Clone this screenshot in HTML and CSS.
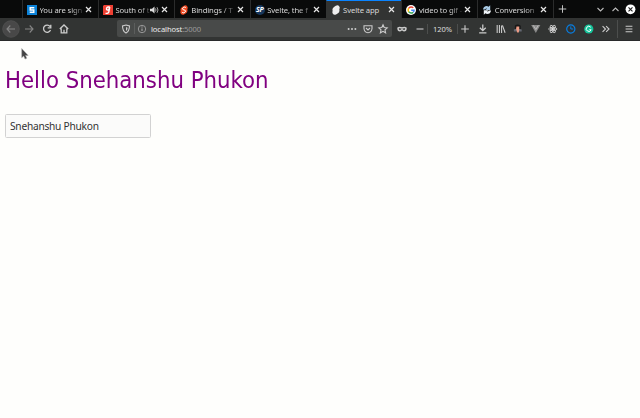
FILE: index.html
```
<!DOCTYPE html>
<html lang="en">
<head>
<meta charset="utf-8">
<title>Svelte app</title>
<link rel="stylesheet" href="styles.css">
</head>
<body>
<header class="tabs">
  <div class="tab"><svg class="fav" viewBox="0 0 10 10"><path fill="#0b82d8" d="M0 0h10v10H0z"/><path d="M7.3 2.8H3.2V5h3.6v2.2H2.7" fill="none" stroke="#fff" stroke-width="1.4"/></svg><span class="title">You are sign</span><svg class="close" viewBox="0 0 7 7"><path d="M1 1l5 5M6 1L1 6"/></svg></div>
  <div class="tab"><svg class="fav" viewBox="0 0 10 10"><path fill="#ee4033" d="M1 0h9v10H0V1z"/><path d="M6.8 2H5Q3.8 2 3.5 3.5T4.6 5h1L6.8 2 5.8 7Q5.5 8.4 4 8.3H2.5" fill="none" stroke="#fff" stroke-width="1.3"/></svg><span class="title">South of t</span><svg class="sound" viewBox="0 0 9 8"><path d="M0 2.8h2L4.5.5v7L2 5.2H0z" fill="#ddd"/><path d="M5.5 2.4q1 1.6 0 3.2M7 1.2q2 2.8 0 5.6" fill="none" stroke="#ccc" stroke-width=".8"/></svg><svg class="close" viewBox="0 0 7 7"><path d="M1 1l5 5M6 1L1 6"/></svg></div>
  <div class="tab"><svg class="fav" viewBox="0 0 10 10"><path fill="#f04a22" d="M4.8.7Q7-.7 8.3 1.4 9.2 2.9 8.3 4 9 7 7 8.2L5 9.4Q3 10.5 1.7 8.4 1 7 1.7 6 .8 3.3 3 1.9z"/><path d="M6.8 2.6Q6 1.5 4.8 2.3L3.9 2.9Q2.8 4 4 4.7l2 .5Q7.3 6 6 7.1l-.9.6Q4 8.4 3.1 7.3" fill="none" stroke="#fff" stroke-width="1"/></svg><span class="title">Bindings / T</span><svg class="close" viewBox="0 0 7 7"><path d="M1 1l5 5M6 1L1 6"/></svg></div>
  <div class="tab"><span class="fav sp">SP</span><span class="title">Svelte, the f</span><svg class="close" viewBox="0 0 7 7"><path d="M1 1l5 5M6 1L1 6"/></svg></div>
  <div class="tab active"><svg class="fav" viewBox="0 0 10 10"><path fill="#eee" d="M4.8.7Q7-.7 8.3 1.4 9.2 2.9 8.3 4 9 7 7 8.2L5 9.4Q3 10.5 1.7 8.4 1 7 1.7 6 .8 3.3 3 1.9z"/></svg><span class="title">Svelte app</span><svg class="close" viewBox="0 0 7 7"><path d="M1 1l5 5M6 1L1 6"/></svg></div>
  <div class="tab"><svg class="fav" viewBox="0 0 10 10"><circle cx="5" cy="5" r="5" fill="#fff"/><g fill="none" stroke-width="1.4"><path stroke="#ea4335" d="M7.3 2.8Q5 .9 2.6 3.2"/><path stroke="#fbbc05" d="M2.6 3.2Q1.6 5 2.6 6.8"/><path stroke="#34a853" d="M2.6 6.8Q4.6 9 7.2 7.3"/><path stroke="#4285f4" d="M7.2 7.3Q8 6.5 8.1 5.2H5.2"/></g></svg><span class="title">video to gif -</span><svg class="close" viewBox="0 0 7 7"><path d="M1 1l5 5M6 1L1 6"/></svg></div>
  <div class="tab"><svg class="fav" viewBox="0 0 10 10"><path fill="#a9cbe6" d="M1 4.6Q1.4 1 5 1L6.6 1.7 8.2.3V5H3.6L5 3.6Q3.7 3.2 3.2 4.6z"/><path fill="#f0f5fa" d="M9 5.5Q8.6 9 5 9L3.4 8.3 1.8 9.7V5.2H6.4L5 6.5Q6.3 6.9 6.8 5.5z"/></svg><span class="title">Conversion</span><svg class="close" viewBox="0 0 7 7"><path d="M1 1l5 5M6 1L1 6"/></svg></div>
  <svg class="newtab" viewBox="0 0 18 18"><path d="M9 5v8M5 9h8"/></svg>
  <div class="window">
    <svg viewBox="0 0 15 18"><path d="M4.5 8l3 3 3-3"/></svg>
    <svg viewBox="0 0 15 18"><path d="M4.5 11l3-3 3 3"/></svg>
    <svg viewBox="0 0 15 18"><circle cx="7.5" cy="9.3" r="4.9" fill="#fff" stroke="none"/><path d="M5.5 7.3l4 4M9.5 7.3l-4 4" stroke="#222"/></svg>
  </div>
</header>
<nav class="bar">
  <svg class="ic dim" viewBox="0 0 18 18"><circle cx="9" cy="9" r="8.3" fill="#484848" stroke="#555" stroke-width=".7"/><path d="M13 9H5M8.3 5.5L5 9l3.3 3.5"/></svg>
  <svg class="ic dim" viewBox="0 0 18 18"><path d="M5 9h8M9.7 5.5L13 9l-3.3 3.5"/></svg>
  <svg class="ic" viewBox="0 0 18 18"><path d="M12 6.5A3.6 3.6 0 1 0 12.5 10M12.8 4.8v3H9.7" stroke-width="1.3"/></svg>
  <svg class="ic home" viewBox="0 0 18 18"><path d="M4.8 9L9 5l4.2 4M6.2 8.5v4.3h5.6V8.5M9 12.7V9.8" stroke-width="1.3"/></svg>
  <div class="url">
    <svg class="ic" viewBox="0 0 18 18"><path d="M9 5l3.5 1q0 5-3.5 7-3.5-2-3.5-7z"/><path d="M9 7v4q1.5-1 1.6-3.3z" fill="#ccc" stroke="none"/></svg>
    <i class="sep"></i>
    <svg class="ic info" viewBox="0 0 18 18"><circle cx="9" cy="9" r="3.7" stroke-width=".8"/><path d="M9 8.5v2.6M9 6.5v1"/></svg>
    <span class="host">localhost<span class="port">:5000</span></span>
    <div class="actions">
      <svg class="ic" viewBox="0 0 18 18"><g fill="#ccc" stroke="none"><circle cx="5.6" cy="9" r="1"/><circle cx="9" cy="9" r="1"/><circle cx="12.4" cy="9" r="1"/></g></svg>
      <svg class="ic" viewBox="0 0 18 18"><path d="M5 5.8h8v3q-.5 3.7-4 3.9-3.5-.2-4-3.9zM7 8l2 2 2-2"/></svg>
      <svg class="ic" viewBox="0 0 18 18"><path d="M9 4.8l1.2 2.7 3 .3-2.2 2 .6 3L9 11.3l-2.6 1.5.6-3-2.2-2 3-.3z"/></svg>
    </div>
  </div>
  <svg class="ic mask" viewBox="0 0 18 18"><path d="M5 8q1.5-1.2 4 0 2.5-1.2 4 0 0 2.8-2 2.8L9 9.7l-2 1.1Q5 10.8 5 8z" stroke-width="1.5"/></svg>
  <svg class="ic" viewBox="0 0 18 18"><path d="M5.5 9h7"/></svg>
  <span class="zoom">120%</span>
  <svg class="ic" viewBox="0 0 18 18"><path d="M9 5.2v7.6M5.2 9h7.6"/></svg>
  <div class="tools">
    <svg viewBox="0 0 18 18"><path d="M9 4.5v6M6 7.7l3 3 3-3M5.3 13h7.4" stroke-width="1.3"/></svg>
    <svg viewBox="0 0 18 18"><path d="M5.3 5v8M7.6 5v8M9.8 5.5V13M10.7 5.3l2.7 7.5" stroke-width="1.1"/></svg>
    <svg class="avatar" viewBox="0 0 18 18"><path fill="#171717" d="M6 5.5Q9 3 12 5.8L12 9H6z"/><path fill="#646872" d="M5 9.5l3-1 5 1v2H5z"/><path fill="#ee9c85" d="M7.6 6.5h2.9v3.2l-.5 3H8.4L7.3 9z"/></svg>
    <svg viewBox="0 0 18 18"><path fill="#8b8b8b" stroke="none" d="M4.3 5h9.4L9 13.2z"/><path d="M6.5 5.3L9 9.5l2.5-4.2" stroke="#bbb"/></svg>
    <svg viewBox="0 0 18 18"><g stroke-width=".9"><ellipse cx="9" cy="9" rx="4.3" ry="1.7"/><ellipse cx="9" cy="9" rx="4.3" ry="1.7" transform="rotate(60 9 9)"/><ellipse cx="9" cy="9" rx="4.3" ry="1.7" transform="rotate(120 9 9)"/></g><circle cx="9" cy="9" r="1.2" fill="#ddd" stroke="none"/></svg>
    <svg viewBox="0 0 18 18"><circle cx="9" cy="9" r="4.2" stroke="#087de0" stroke-width="1.2"/><path d="M9 6.3V9h2.5" stroke="#087de0"/></svg>
    <svg viewBox="0 0 18 18"><circle cx="9" cy="9" r="4.7" fill="#15c39a" stroke="none"/><path d="M11 7.2A2.6 2.6 0 1 0 11.4 9.8H9.5" stroke="#fff"/></svg>
    <svg viewBox="0 0 18 18"><path d="M5.7 6l3 3-3 3M9.3 6l3 3-3 3" stroke-width="1.1"/></svg>
  </div>
  <i class="sep tall"></i>
  <svg class="ic menu" viewBox="0 0 18 18"><path d="M5.6 6.3h6.8M5.6 9h6.8M5.6 11.7h6.8"/></svg>
</nav>
<main class="page">
  <h1>Hello Snehanshu Phukon</h1>
  <input class="name" type="text" value="Snehanshu Phukon">
</main>
<svg class="cursor" viewBox="0 0 8 12"><path d="M.7.5v9.2l2-1.6 1.3 3 1.8-.9-1.3-2.8h2.7z" fill="#444" stroke="#aaa" stroke-width=".5"/></svg>
</body>
</html>
```
FILE: styles.css
```
* { box-sizing: border-box; }
body { margin: 0; height: 418px; overflow: hidden; background: #fefefc; font-family: "Noto Sans", sans-serif; }
svg { display: block; flex: none; }
.tabs { display: flex; height: 18px; padding-left: 22px; background: #090a0a; color: #d8d8d8; font-size: 7.7px; letter-spacing: -.12px; }
.tab { display: flex; align-items: center; width: 75.9px; flex: none; padding: 1px 6px 0 4px; border-left: 1px solid #2b2c2c; }
.tab.active { background: #323433; border-top: 1px solid #0a84ff; border-left-color: #323433; padding-top: 0; }
.fav { width: 10px; height: 10px; margin-right: 2.5px; flex: none; }
.sp { background: #17375c; border-radius: 5px; color: #fff; font: italic bold 7px/10px "Noto Sans", sans-serif; text-align: center; letter-spacing: -.3px; }
.title { flex: 1; min-width: 0; white-space: nowrap; line-height: 12px; -webkit-mask-image: linear-gradient(to right, #000 70%, transparent 108%); mask-image: linear-gradient(to right, #000 70%, transparent 108%); }
.active .title { -webkit-mask-image: none; mask-image: none; }
.sound { width: 9px; height: 8px; }
.close { width: 7px; height: 7px; margin-left: 2px; fill: none; stroke: #e6e6e6; stroke-width: 1.2; }
.newtab { width: 18px; height: 18px; border-left: 1px solid #2b2c2c; fill: none; stroke: #ccc; }
.window { display: flex; margin-left: auto; padding-right: 2px; }
.window svg { width: 15px; height: 18px; fill: none; stroke: #bbb; stroke-width: 1.1; }
.bar { display: flex; align-items: center; height: 23px; padding: 0 2px 1px; background: #323433; border-bottom: 1px solid #292a2a; }
.ic { width: 18px; height: 18px; fill: none; stroke: #ccc; stroke-width: 1.1; }
.dim { stroke: #858585; }
.home { margin-left: -1px; }
.url { display: flex; align-items: center; width: 275px; height: 17px; margin-left: 44px; flex: none; border-radius: 2px; background: #484a49; }
.sep { width: 1px; height: 11px; background: #5c5e5d; flex: none; margin: 0 -1px; }
.info { stroke: #aaa; margin-left: -1px; }
.host { color: #ededed; font-size: 7.6px; line-height: 12px; letter-spacing: -.1px; white-space: nowrap; }
.port { color: #999; }
.actions { display: flex; margin-left: auto; }
.actions .ic { margin-left: -2.5px; }
.mask { margin-left: 1px; }
.zoom { width: 31px; height: 10px; margin: 0 -2px; flex: none; border: solid #4c4e4d; border-width: 0 1px; color: #ddd; font-size: 7.6px; line-height: 11px; letter-spacing: -.1px; text-align: center; }
.tools { display: flex; }
.tools svg { width: 17.6px; height: 18px; fill: none; stroke: #ccc; }
.tools .avatar { stroke: none; }
.tall { height: 18px; margin: 0 0 0 2px; background: #4c4e4d; }
.menu { margin-left: 2px; }
.page { padding: 25px 5px 0; }
h1 { width: max-content; margin: 0 0 20px; color: purple; font: 400 22.6px/28px "DejaVu Sans", sans-serif; white-space: nowrap; transform: scaleX(.942); transform-origin: left; }
.name { display: block; width: 146px; height: 24px; margin: 0; padding: 0 4px; border: 1px solid #d2d2d2; border-radius: 1.5px; background: #fbfbfa; color: #333; font: 10.2px "Noto Sans", sans-serif; letter-spacing: -.25px; outline: none; }
.cursor { position: absolute; left: 21px; top: 48px; width: 8px; height: 12px; }
```
